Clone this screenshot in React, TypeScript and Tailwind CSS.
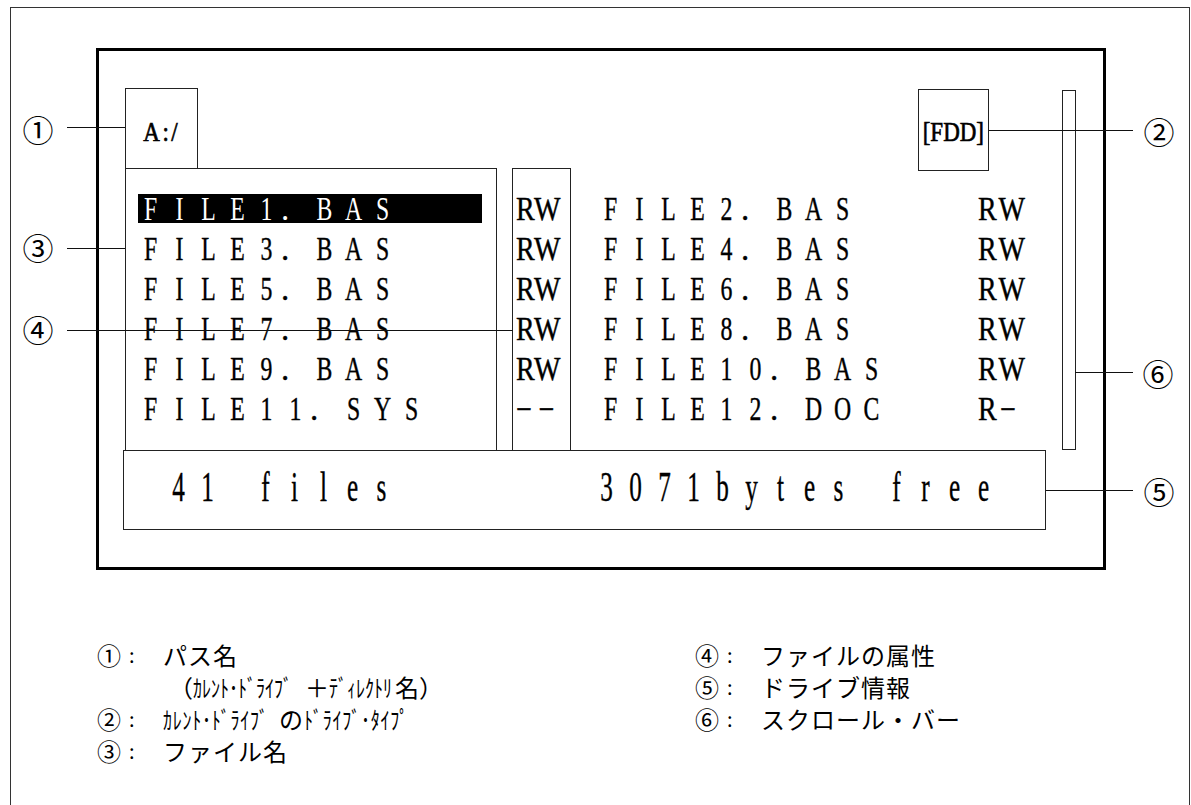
import React from "react";

type Row = { name: string; attr: string; right: string; rattr: string };

const rows: Row[] = [
  { name: "FILE1.BAS", attr: "RW", right: "FILE2.BAS", rattr: "RW" },
  { name: "FILE3.BAS", attr: "RW", right: "FILE4.BAS", rattr: "RW" },
  { name: "FILE5.BAS", attr: "RW", right: "FILE6.BAS", rattr: "RW" },
  { name: "FILE7.BAS", attr: "RW", right: "FILE8.BAS", rattr: "RW" },
  { name: "FILE9.BAS", attr: "RW", right: "FILE10.BAS", rattr: "RW" },
  { name: "FILE11.SYS", attr: "−−", right: "FILE12.DOC", rattr: "R−" },
];

// fixed pitch text, one 29px cell per character (full-width look)
function Cells({ text, scale }: { text: string; scale: string }) {
  return (
    <span className="inline-flex">
      {Array.from(text).map((ch, i) =>
        ch === "." ? (
          <span key={i} className="inline-block w-[29px] text-left">
            .
          </span>
        ) : (
          <span key={i} className={"inline-block w-[29px] text-center " + scale}>
            {ch === " " ? "\u00a0" : ch}
          </span>
        )
      )}
    </span>
  );
}

// half-width kana, squeezed like the old printer font
function Hankaku({ text, w }: { text: string; w: string }) {
  return (
    <span className={"inline-block whitespace-nowrap " + w}>
      <span className="inline-block origin-left scale-x-[0.75]">{text}</span>
    </span>
  );
}

function Callout({ n, x, y }: { n: string; x: number; y: number }) {
  return (
    <span
      className="absolute flex h-[32px] w-[32px] items-center justify-center font-[Noto_Sans_CJK_JP,sans-serif] text-[31px] leading-none"
      style={{ left: x - 16, top: y - 16 }}
    >
      {n}
    </span>
  );
}

function Leader({ x1, x2, y }: { x1: number; x2: number; y: number }) {
  return <div className="absolute h-px bg-[#111]" style={{ left: x1, top: y, width: x2 - x1 }} />;
}

function Legend({ n, children }: { n: string; children: React.ReactNode }) {
  return (
    <div className="flex h-[32px] items-center">
      <span className="w-[28px] text-[24px] leading-none">{n}</span>
      <span className="w-[38px] pl-[4px] text-[20px]">:</span>
      <span className="flex items-center text-[24px] tracking-[1px]">{children}</span>
    </div>
  );
}

export default function App() {
  return (
    <div className="relative h-[805px] w-[1191px] overflow-hidden bg-white pl-[10px] pt-[7px] font-[Liberation_Serif,serif] text-black">
      <div className="h-[830px] w-[1180px] border-l border-r border-t border-[#333] pt-[40px]">
        {/* screen */}
        <div className="ml-[85px] h-[522px] w-[1010px] border-[3px] border-black pl-[26px] pt-[37px] [-webkit-text-stroke:0.4px_black]">
          <div className="flex">
            <div className="w-[937px]">
              <div className="flex h-[80px]">
                <div className="flex h-[80px] w-[73px] items-center justify-center border-l-[1.5px] border-r-[1.5px] border-t-[1.5px] border-[#222] pt-[8px] text-[27px] tracking-[3px] [-webkit-text-stroke:0.7px_black]">
                  <span className="inline-block scale-x-[0.85]">A:/</span>
                </div>
                <div className="ml-[720px] mt-[1px] flex h-[82px] w-[71px] items-center justify-center border-[1.5px] border-[#222] pt-[4px] text-[28px] [-webkit-text-stroke:0.7px_black]">
                  <span className="inline-block scale-x-[0.82]">[FDD]</span>
                </div>
              </div>
              <div className="flex h-[282px]">
                <div className="w-[372px] border-l-[1.5px] border-r-[1.5px] border-t-[1.5px] border-[#222] pt-[19.5px]">
                  {rows.map((r, i) => (
                    <div key={r.name} className="relative h-[40px] pl-[10px] text-[33px] leading-[40px]">
                      {i === 0 && <span className="absolute left-[12px] top-[5px] h-[29px] w-[344px] bg-black" />}
                      <span className={"relative " + (i === 0 ? "text-white [-webkit-text-stroke:0px]" : "")}>
                        <Cells text={r.name} scale="scale-x-[0.72]" />
                      </span>
                    </div>
                  ))}
                </div>
                <div className="ml-[15px] w-[59px] border-l-[1.5px] border-r-[1.5px] border-t-[1.5px] border-[#222] pl-[3px] pt-[19.5px]">
                  {rows.map((r) => (
                    <div key={r.name} className="h-[40px] whitespace-nowrap text-[33px] leading-[40px]">
                      <span
                        className={
                          "inline-block origin-left scale-x-[0.85] " +
                          (r.attr === "RW" ? "tracking-[1px]" : "tracking-[8px]")
                        }
                      >
                        {r.attr}
                      </span>
                    </div>
                  ))}
                </div>
                <div className="flex-1 pl-[25px] pt-[21px]">
                  {rows.map((r) => (
                    <div key={r.right} className="flex h-[40px] whitespace-nowrap text-[33px] leading-[40px]">
                      <span className="w-[382px]">
                        <Cells text={r.right} scale="scale-x-[0.72]" />
                      </span>
                      <span className="inline-block origin-left scale-x-[0.85] tracking-[4px]">{r.rattr}</span>
                    </div>
                  ))}
                </div>
              </div>
            </div>
            <div className="mt-[2px] h-[360px] w-[14px] border-[1.5px] border-[#222]" />
          </div>
          <div className="-ml-[2px] flex h-[80px] w-[923px] border-[1.5px] border-[#222] pl-[40px] text-[42px] leading-[72px]">
            <span className="w-[428px]">
              <Cells text="41 files" scale="scale-x-[0.6]" />
            </span>
            <Cells text="3071bytes free" scale="scale-x-[0.6]" />
          </div>
        </div>

        {/* legend */}
        <div className="mt-[69px] flex pl-[86px] font-[Noto_Sans_CJK_JP,sans-serif]">
          <div className="w-[598px]">
            <Legend n="①">パス名</Legend>
            <div className="flex h-[32px] items-center pl-[72px] text-[24px]">
              <span>（</span>
              <Hankaku text="ｶﾚﾝﾄ･ﾄﾞﾗｲﾌﾞ" w="w-[108px]" />
              <span className="ml-[4px]">＋</span>
              <Hankaku text="ﾃﾞｨﾚｸﾄﾘ" w="w-[66px]" />
              <span>名）</span>
            </div>
            <Legend n="②">
              <Hankaku text="ｶﾚﾝﾄ･ﾄﾞﾗｲﾌﾞ" w="w-[108px]" />
              <span className="ml-[8px]">の</span>
              <Hankaku text="ﾄﾞﾗｲﾌﾞ･ﾀｲﾌﾟ" w="w-[99px]" />
            </Legend>
            <Legend n="③">ファイル名</Legend>
          </div>
          <div>
            <Legend n="④">ファイルの属性</Legend>
            <Legend n="⑤">ドライブ情報</Legend>
            <Legend n="⑥">スクロール・バー</Legend>
          </div>
        </div>
      </div>

      {/* callouts */}
      <Leader x1={67} x2={125} y={127} />
      <Leader x1={67} x2={125} y={248} />
      <Leader x1={67} x2={513} y={330} />
      <Leader x1={989} x2={1133} y={130} />
      <Leader x1={1075} x2={1133} y={372} />
      <Leader x1={1046} x2={1133} y={490} />
      <Callout n="①" x={38} y={128} />
      <Callout n="③" x={38} y={246} />
      <Callout n="④" x={38} y={328} />
      <Callout n="②" x={1159} y={130} />
      <Callout n="⑥" x={1158} y={372} />
      <Callout n="⑤" x={1159} y={490} />
    </div>
  );
}
